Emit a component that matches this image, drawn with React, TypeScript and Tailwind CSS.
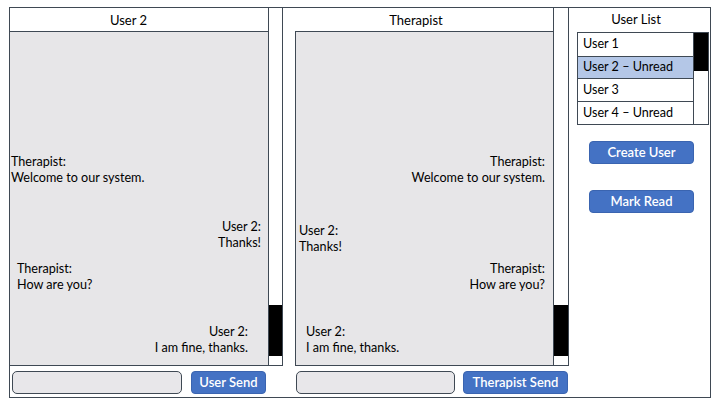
import React from "react";

const font = { fontFamily: "Lato, 'Open Sans', sans-serif" };

type Msg = { who: string; text: string; align: "left" | "right"; mt: string; pad: string };

function Message({ m }: { m: Msg }) {
  return (
    <div className={`${m.mt} ${m.pad} ${m.align === "right" ? "text-right" : "text-left"} text-[12.6px] leading-[16px] text-black`}>
      <div>{m.who}</div>
      <div>{m.text}</div>
    </div>
  );
}

function Scrollbar({ extra }: { extra: string }) {
  return (
    <div className={`flex flex-col self-start border-x border-b border-[#3f4954] bg-white ${extra}`}>
      <div className="flex-1" />
      <div className="h-[51px] bg-black" />
      <div className="h-[9px]" />
    </div>
  );
}

export default function App() {
  const leftMsgs: Msg[] = [
    { who: "Therapist:", text: "Welcome to our system.", align: "left", mt: "mt-[122px]", pad: "pl-[1px]" },
    { who: "User 2:", text: "Thanks!", align: "right", mt: "mt-[33px]", pad: "pr-[7px]" },
    { who: "Therapist:", text: "How are you?", align: "left", mt: "mt-[10px]", pad: "pl-[7px]" },
    { who: "User 2:", text: "I am fine, thanks.", align: "right", mt: "mt-[31px]", pad: "pr-[20px]" },
  ];
  const midMsgs: Msg[] = [
    { who: "Therapist:", text: "Welcome to our system.", align: "right", mt: "mt-[122px]", pad: "pr-[8px]" },
    { who: "User 2:", text: "Thanks!", align: "left", mt: "mt-[37px]", pad: "pl-[3px]" },
    { who: "Therapist:", text: "How are you?", align: "right", mt: "mt-[6px]", pad: "pr-[8px]" },
    { who: "User 2:", text: "I am fine, thanks.", align: "left", mt: "mt-[31px]", pad: "pl-[10px]" },
  ];
  const users = [
    { name: "User 1", sel: false },
    { name: "User 2 – Unread", sel: true },
    { name: "User 3", sel: false },
    { name: "User 4 – Unread", sel: false },
  ];

  return (
    <div className="w-[720px] h-[401px] bg-white" style={font}>
      <div className="ml-[9px] pt-[7px]">
        <div className="flex w-[702px] h-[391px] border border-[#3f4954]">
          {/* Column 1 */}
          <div className="flex flex-col w-[273px]">
            <div className="flex h-[358px] items-start">
              <div className="flex flex-col w-[258px]">
                <div className="h-[23px] flex items-center justify-center pt-[3px] pr-[21px] text-[13px] text-black">User 2</div>
                <div className="flex flex-col h-[335px] border-y border-[#3f4954] bg-[#e7e6e8]">
                  {leftMsgs.map((m, i) => (
                    <Message key={i} m={m} />
                  ))}
                </div>
              </div>
              <Scrollbar extra="w-[15px] h-[358px]" />
            </div>
            <div className="flex mt-[5px] pl-[2px]">
              <div className="w-[170px] h-[23px] rounded-[5px] border border-[#3f4954] bg-[#e8e7ea]" />
              <button className="ml-[9px] w-[75px] h-[23px] rounded-[4px] border border-[#3a64b0] bg-[#4472c4] text-white text-[13px] font-semibold leading-none">
                User Send
              </button>
            </div>
          </div>

          {/* Column 2 */}
          <div className="flex flex-col w-[274px] ml-[12px]">
            <div className="flex h-[358px] items-start">
              <div className="flex flex-col w-[258px]">
                <div className="h-[23px] flex items-center justify-center pt-[3px] pr-[16px] text-[13px] text-black">Therapist</div>
                <div className="flex flex-col h-[335px] border-y border-l border-[#3f4954] bg-[#e7e6e8]">
                  {midMsgs.map((m, i) => (
                    <Message key={i} m={m} />
                  ))}
                </div>
              </div>
              <Scrollbar extra="w-[16px] h-[358px]" />
            </div>
            <div className="flex mt-[5px] pl-[1px]">
              <div className="w-[159px] h-[23px] rounded-[5px] border border-[#3f4954] bg-[#e8e7ea]" />
              <button className="ml-[8px] w-[105px] h-[23px] rounded-[4px] border border-[#3a64b0] bg-[#4472c4] text-white text-[13px] font-semibold leading-none">
                Therapist Send
              </button>
            </div>
          </div>

          {/* Column 3 */}
          <div className="flex flex-col w-[132px] ml-[8px]">
            <div className="h-[24px] flex items-center justify-center pr-[14px] text-[13px] text-black">User List</div>
            <div className="flex w-[132px] h-[93px] border border-[#3f4954]">
              <div className="flex flex-col w-[116px]">
                {users.map((u, i) => (
                  <div
                    key={i}
                    className={`h-[23px] flex items-center pl-[5px] text-[12.6px] text-black ${i > 0 ? "border-t border-[#3f4954]" : ""} ${u.sel ? "bg-[#b4c7e7]" : "bg-white"}`}
                  >
                    {u.name}
                  </div>
                ))}
              </div>
              <div className="flex flex-col w-[15px] border-l border-[#3f4954]">
                <div className="h-[38px] bg-black" />
              </div>
            </div>
            <button className="mt-[16px] ml-[12px] w-[105px] h-[23px] rounded-[4px] border border-[#3a64b0] bg-[#4472c4] text-white text-[13px] font-semibold leading-none">
              Create User
            </button>
            <button className="mt-[26px] ml-[12px] w-[105px] h-[23px] rounded-[4px] border border-[#3a64b0] bg-[#4472c4] text-white text-[13px] font-semibold leading-none">
              Mark Read
            </button>
          </div>
        </div>
      </div>
    </div>
  );
}
